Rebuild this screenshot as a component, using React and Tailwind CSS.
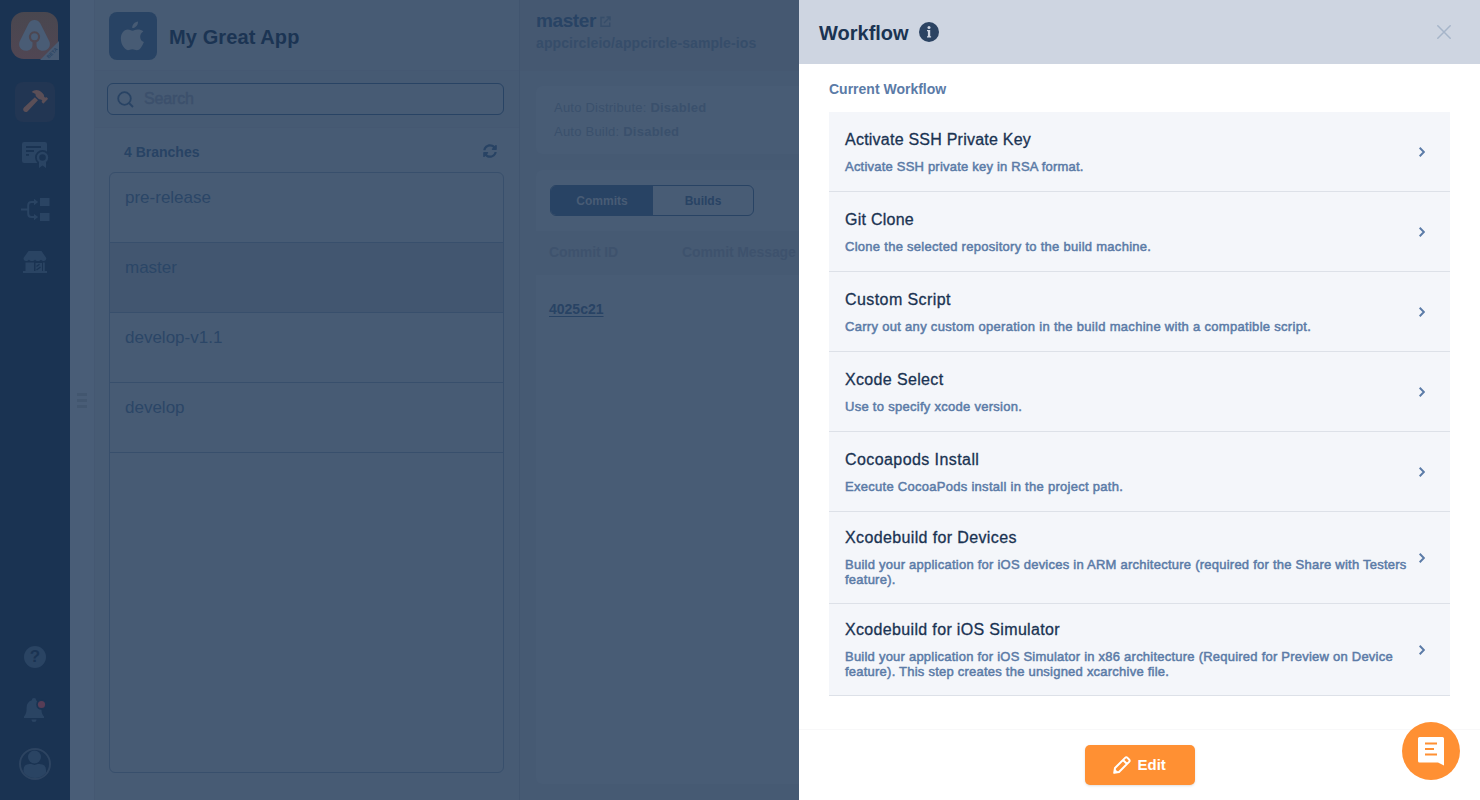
import React from "react";
import { FaHammer } from "react-icons/fa";

const steps = [
  { title: "Activate SSH Private Key", lines: ["Activate SSH private key in RSA format."], tt: "tracking-[0.23px]", dt: "tracking-[0.21px]" },
  { title: "Git Clone", lines: ["Clone the selected repository to the build machine."], tt: "tracking-[0.25px]", dt: "tracking-[0.28px]" },
  { title: "Custom Script", lines: ["Carry out any custom operation in the build machine with a compatible script."], tt: "tracking-[0.42px]", dt: "tracking-[0.3px]" },
  { title: "Xcode Select", lines: ["Use to specify xcode version."], tt: "tracking-[0.35px]", dt: "tracking-[0.28px]" },
  { title: "Cocoapods Install", lines: ["Execute CocoaPods install in the project path."], tt: "tracking-[0.42px]", dt: "tracking-[0.28px]" },
  { title: "Xcodebuild for Devices", lines: ["Build your application for iOS devices in ARM architecture (required for the Share with Testers", "feature)."], tt: "tracking-[0.37px]", dt: "tracking-[0.24px]" },
  { title: "Xcodebuild for iOS Simulator", lines: ["Build your application for iOS Simulator in x86 architecture (Required for Preview on Device", "feature). This step creates the unsigned xcarchive file."], tt: "tracking-[0.34px]", dt: "tracking-[0.23px]" },
];

const branches = ["pre-release", "master", "develop-v1.1", "develop"];

function Logo() {
  return (
    <svg className="block overflow-visible" width="48" height="48" viewBox="0 0 48 48">
      <defs>
        <linearGradient id="lg" x1="0" y1="0" x2="0" y2="1">
          <stop offset="0" stopColor="#49474f" />
          <stop offset="1" stopColor="#504653" />
        </linearGradient>
      </defs>
      <rect width="47" height="47" rx="13" fill="url(#lg)" />
      <path d="M23.5 8c2.800 0 4.800 1.400 6 3.800l9 18c1.300 3.500-.5 9-6.500 9-4 0-6.500-2.500-6.500-6v-2.600a5.600 5.600 0 1 0-4 0V32.800c0 3.500-2.500 6-6.500 6-6 0-7.800-5.500-6.500-9l9-18c1.200-2.400 3.200-3.800 6-3.800z" fill="#495c75" />
      <circle cx="23.500" cy="24.800" r="3.500" fill="#495c75" />
      <path d="M48 29v19H29z" fill="#475a73" />
      <text x="0" y="0" transform="translate(37.800 46.800) rotate(-45)" fontSize="5" fontWeight="700" fill="#2b4563" fontFamily="Liberation Sans, sans-serif">BETA</text>
    </svg>
  );
}

function CertIcon() {
  return (
    <svg className="block" width="27" height="27" viewBox="0 0 27 27">
      <rect x="0" y="0" width="25" height="21" rx="2" fill="#2a4463" />
      <path d="M4 5h15M4 9h8M4 12.800h3" stroke="#1a3352" strokeWidth="1.800" />
      <circle cx="20.500" cy="15.500" r="7.500" fill="#1a3352" />
      <path d="M17 19h7v7l-3.500-2.500L17 26z" fill="#2a4463" />
      <circle cx="20.500" cy="15.500" r="4.500" fill="#1a3352" stroke="#2a4463" strokeWidth="2.400" />
    </svg>
  );
}

function FlowIcon() {
  return (
    <svg className="block" width="29" height="24" viewBox="0 0 29 24">
      <path d="M0 11.500h7M14 4h-3.500Q7.200 4 7.200 7.300v8.500q0 3.300 3.300 3.300H14" fill="none" stroke="#2a4463" strokeWidth="2" />
      <path d="M13 .8l4.200 3.200L13 7.200zM13 15.900l4.200 3.200-4.200 3.200z" fill="#2a4463" />
      <rect x="19" y="0" width="9.500" height="8" fill="#2a4463" />
      <rect x="19" y="15" width="9.500" height="8" fill="#2a4463" />
    </svg>
  );
}

function StoreIcon() {
  return (
    <svg className="block" width="24" height="22" viewBox="0 0 24 22" fill="#2a4463">
      <path d="M5.500 0h13L23.300 7c0 2-1 3-2.500 3s-2.300-.7-2.800-1.300c-.8.900-1.800 1.300-3.100 1.300S12.600 9.500 12 8.700c-.7.900-1.700 1.300-3 1.300s-2.500-.4-3.100-1.300C5.300 9.500 4.300 10 3 10 1.500 10 .5 9 .5 7z" />
      <path d="M2.500 11.500h8.500V20h1.500v-8h6.500v8H20v-8.500h1.800V20H24v2H0v-2h2.500z" />
      <path d="M13.500 12.500h4.500v7.500h-4.500z" />
      <path d="M13.500 15.500l3-2.200M13.500 19l4-3" stroke="#1a3352" strokeWidth="1.200" />
    </svg>
  );
}

function Sidebar() {
  return (
    <aside className="flex h-full w-[70px] shrink-0 flex-col bg-[#1a3352]">
      <div className="pl-[11px] pt-3"><Logo /></div>
      <div className="ml-[15px] mt-[22px] flex h-10 w-10 items-center justify-center rounded-lg bg-[#223653]">
        <FaHammer className="-mt-0.5 h-[22px] w-[25px] text-[#5b4f57]" />
      </div>
      <div className="ml-[22px] mt-5"><CertIcon /></div>
      <div className="ml-[21px] mt-[29px]"><FlowIcon /></div>
      <div className="ml-[23px] mt-[29px]"><StoreIcon /></div>
      <div className="ml-6 mt-auto flex h-[22px] w-[22px] items-center justify-center rounded-full bg-[#2a4463] text-[17px] font-bold text-[#1a3352]">?</div>
      <svg className="ml-6 mt-[30px] block" width="22" height="25" viewBox="0 0 22 25">
        <path d="M10 0a2.200 2.200 0 0 0-2.200 2.300C4.500 3.300 2.600 6 2.600 9.500c0 5-.7 6.700-2.600 9V20h20v-1.500c-1.900-2.300-2.600-4-2.600-9L12.200 2.300A2.200 2.200 0 0 0 10 0zM7.500 21.500a2.500 2.500 0 0 0 5 0z" fill="#2a4463" />
        <circle cx="17.500" cy="6.500" r="5.300" fill="#1a3352" />
        <circle cx="17.500" cy="6.500" r="3.600" fill="#573d56" />
      </svg>
      <svg className="mb-5 ml-[19px] mt-[25px] block" width="32" height="32" viewBox="0 0 32 32">
        <clipPath id="av"><circle cx="16" cy="16" r="14" /></clipPath>
        <circle cx="16" cy="16" r="15" fill="none" stroke="#2d4461" strokeWidth="2" />
        <g clipPath="url(#av)" fill="#2a4463">
          <circle cx="15.500" cy="9" r="6.500" />
          <path d="M4.500 32V22q0-6 6-6h2l3 1 3-1h2q6.500 0 6.500 6v10z" />
        </g>
      </svg>
    </aside>
  );
}

function BranchPanel() {
  return (
    <section className="flex h-full w-[425px] shrink-0 flex-col border-r border-[#41556f] bg-[#475b74]">
      <header className="flex h-[71px] items-start border-b border-[#455872] pl-[14px] pt-3">
        <div className="flex h-12 w-12 items-center justify-center rounded-lg bg-[#284364]">
          <svg width="26" height="30" viewBox="0 0 24 28" fill="#475b74">
            <path d="M16.700.5c.1 1.500-.5 3-1.400 4.100-1 1.200-2.500 2-4 1.900-.2-1.500.5-3 1.400-4C13.700 1.400 15.300.6 16.700.5zM21.700 9.700c-2 1.200-3 2.800-3 4.900 0 2.500 1.400 4.200 3.500 5.100-.7 2-1.700 3.700-3 5.400-1 1.300-2.200 2.100-3.700 2.100-1.600 0-2.200-.9-4.100-.9s-2.600.9-4.100.9c-1.700 0-3-1.200-4.400-3.300C.2 19.700-.2 14 2.300 10.700 3.500 9 5.300 8 7.100 8c1.800 0 3 1 4.500 1 1.400 0 2.500-1 4.700-1 2.200 0 4.100.6 5.400 1.700z" />
          </svg>
        </div>
        <h1 className="ml-3 mt-[11px] text-[20px] font-bold leading-7 tracking-[0.1px] text-[#1b3453]">My Great App</h1>
      </header>
      <div className="h-[57px] border-b border-[#455872] bg-[#465a73] pl-3 pt-3">
        <div className="flex h-8 w-[397px] items-center rounded-md border border-[#284364] bg-[#475b74] pl-[9px]">
          <svg width="17" height="17" viewBox="0 0 17 17" fill="none" stroke="#284364" strokeWidth="1.800">
            <circle cx="7.500" cy="7.500" r="6.300" /><path d="M12 12l4 4" />
          </svg>
          <span className="ml-[10px] text-[16px] tracking-[-0.15px] text-[#3c506c] [-webkit-text-stroke:0.5px]">Search</span>
        </div>
      </div>
      <div className="flex h-11 items-center justify-between pb-px pl-[29px] pr-[22px] pt-[5px]">
        <span className="text-[14px] font-bold text-[#284364]">4 Branches</span>
        <svg className="-mt-0.5" width="14" height="14" viewBox="0 0 512 512" fill="#284364">
          <path d="M370.700 133.300C339.500 104 298.900 88 255.800 88c-77.500.1-144.300 53.200-162.800 126.900-1.300 5.400-6.100 9.100-11.700 9.100H24.100c-7.500 0-13.200-6.800-11.800-14.200C33.900 94.900 134.800 8 256 8c66.400 0 126.800 26.100 171.300 68.700L463 41c15.100-15.100 41-4.400 41 17v134c0 13.300-10.700 24-24 24H346c-21.400 0-32.100-25.900-17-41l41.700-41.700zM32 296h134c21.400 0 32.100 25.900 17 41l-41.800 41.800c31.300 29.300 71.800 45.300 114.900 45.300 77.400-.1 144.300-53.100 162.800-126.800 1.300-5.400 6.100-9.100 11.700-9.100h57.300c7.500 0 13.200 6.800 11.800 14.200C478.100 417.100 377.200 504 256 504c-66.400 0-126.800-26.100-171.300-68.700L49 471c-15.100 15.100-41 4.400-41-17V320c0-13.300 10.700-24 24-24z" />
        </svg>
      </div>
      <div className="ml-[14px] h-[601px] w-[395px] overflow-hidden rounded-md border border-[#384f6c]">
        {branches.map((b) => (
          <div key={b} className={"h-[70px] border-b border-[#384f6c] pl-[15px] pt-[13px] text-[17px] leading-6 text-[#2b4667] " + (b === "master" ? "bg-[#425670]" : "")}>{b}</div>
        ))}
      </div>
    </section>
  );
}

function Detail() {
  return (
    <section className="flex h-full w-[279px] shrink-0 flex-col overflow-hidden bg-[#465a73]">
      <header className="h-[71px] bg-[#455871] pl-4 pt-[9px]">
        <div className="flex items-center gap-1">
          <span className="text-[19px] font-bold leading-6 tracking-[-0.4px] text-[#284364]">master</span>
          <svg width="11" height="11" viewBox="0 0 11 11" fill="none" stroke="#364d6a" strokeWidth="1.400">
            <path d="M4.500 1.500H1v8.700h8.700V6.500M4 7l5.500-5.500M6.500 1H10v3.500" />
          </svg>
        </div>
        <div className="whitespace-nowrap text-[14px] font-bold leading-5 tracking-[0.1px] text-[#364d6a]">appcircleio/appcircle-sample-ios</div>
      </header>
      <div className="ml-4 mt-[15px] h-[68px] rounded-l-md bg-[#485c75] pl-[18px] pt-[10px] text-[13px] leading-6 tracking-[0.23px] text-[#3a506c]">
        <div>Auto Distribute: <b>Disabled</b></div>
        <div>Auto Build: <b>Disabled</b></div>
      </div>
      <div className="mb-4 ml-4 mt-4 flex-1 rounded-l-md bg-[#485c75] pt-[15px]">
        <div className="ml-[14px] flex h-[31px] w-[204px] overflow-hidden rounded-md border border-[#284364] text-[12px] font-bold leading-[30px]">
          <div className="w-[102px] bg-[#284364] text-center text-[#485c75]">Commits</div>
          <div className="flex-1 text-center text-[#284364]">Builds</div>
        </div>
        <div className="mt-[15px] flex h-[44px] items-center bg-[#465a73] pb-0.5 pl-[13px] text-[14px] font-bold tracking-[-0.1px] text-[#3e526d]">
          <span className="w-[133px]">Commit ID</span><span className="whitespace-nowrap">Commit Message</span>
        </div>
        <div className="pl-[13px] pt-6 text-[14px] font-bold leading-5 text-[#284364] underline underline-offset-2">4025c21</div>
      </div>
    </section>
  );
}

function Drawer() {
  return (
    <main className="flex h-full min-w-0 flex-1 flex-col bg-white">
      <header className="flex h-16 items-center bg-[#ced5e1] pl-5 pr-[29px]">
        <h2 className="pt-0.5 text-[20px] font-bold leading-7 text-[#1a3352]">Workflow</h2>
        <svg className="ml-[10px]" width="20" height="20" viewBox="0 0 20 20">
          <circle cx="10" cy="10" r="10" fill="#2b4362" />
          <path d="M8 8h3.200v6.200h.9v1.200H8v-1.200h.9V9.200H8z" fill="#ced5e1" /><circle cx="10" cy="5.600" r="1.500" fill="#ced5e1" />
        </svg>
        <svg className="ml-auto" width="14" height="14" viewBox="0 0 14 14" stroke="#a6b5c9" strokeWidth="1.500" strokeLinecap="round"><path d="M.8.800l12.400 12.400M13.200.800L.8 13.200" /></svg>
      </header>
      <div className="flex-1 pl-[30px] pr-[30px] pt-[15px]">
        <h3 className="text-[14px] font-bold leading-5 text-[#5b7ba7]">Current Workflow</h3>
        <div className="mt-[13px]">
          {steps.map(({ title, lines, tt, dt }) => (
            <div key={title} className={"flex items-center justify-between border-b border-[#dde1e8] bg-[#f4f6fa] pl-4 pr-[25px] " + (lines.length > 1 ? "h-[92px]" : "h-20")}>
              <div className="whitespace-nowrap pb-0.5">
                <div className={"text-[16px] leading-6 text-[#1a3352] [-webkit-text-stroke:0.3px] " + tt}>{title}</div>
                <div className={"mt-[7px] text-[13px] leading-[15px] text-[#5b7ba7] [-webkit-text-stroke:0.5px] " + dt}>
                  {lines.map((l) => <div key={l}>{l}</div>)}
                </div>
              </div>
              <svg className="-ml-4 shrink-0" width="6" height="10" viewBox="0 0 6 10" fill="none" stroke="#5b7ba7" strokeWidth="2"><path d="M.7.800L4.900 5 .7 9.200" /></svg>
            </div>
          ))}
        </div>
      </div>
      <footer className="flex h-[71px] justify-center border-t border-[#f8f8f9] pt-[15px]">
        <button className="flex h-10 w-[110px] items-center rounded-[5px] bg-[#ff9033] pl-7 text-[15px] font-bold text-white shadow-sm">
          <svg className="mr-[7px]" width="18" height="18" viewBox="0 0 18 18" fill="none" stroke="#fff" strokeWidth="2" strokeLinejoin="round"><path d="M1.200 16.800l.8-4.800L12.100 1.900q1.200-1.200 2.400 0l1.600 1.600q1.200 1.200 0 2.400L6 16zM10 4l4 4" /><path d="M1.500 12.500l4 4-4.500.7z" fill="#fff" stroke="none" /></svg>
          <span className="pt-px">Edit</span>
        </button>
      </footer>
    </main>
  );
}

export default function App() {
  return (
    <div className="relative flex h-[800px] w-[1480px] overflow-hidden bg-[#485c75] font-['Liberation_Sans',sans-serif]">
      <Sidebar />
      <div className="flex h-full w-[25px] shrink-0 flex-col items-center justify-center gap-[3px] border-r border-[#455872] bg-[#495d77]">
        <i className="h-[3px] w-[10px] bg-[#42566f]" /><i className="h-[3px] w-[10px] bg-[#42566f]" /><i className="h-[3px] w-[10px] bg-[#42566f]" />
      </div>
      <BranchPanel />
      <Detail />
      <Drawer />
      <button className="absolute bottom-5 right-5 flex h-[58px] w-[58px] items-center justify-center rounded-full bg-[#ff9033]">
        <svg width="26" height="29" viewBox="0 0 26 29"><path d="M1.500 0h23Q26 0 26 1.500V28.500L20 25.500H1.500Q0 25.500 0 24V1.500Q0 0 1.500 0z" fill="#fff" /><path d="M7 6.500h12M7 12h9M7 17.500h12" stroke="#ff9033" strokeWidth="2" /></svg>
      </button>
    </div>
  );
}
